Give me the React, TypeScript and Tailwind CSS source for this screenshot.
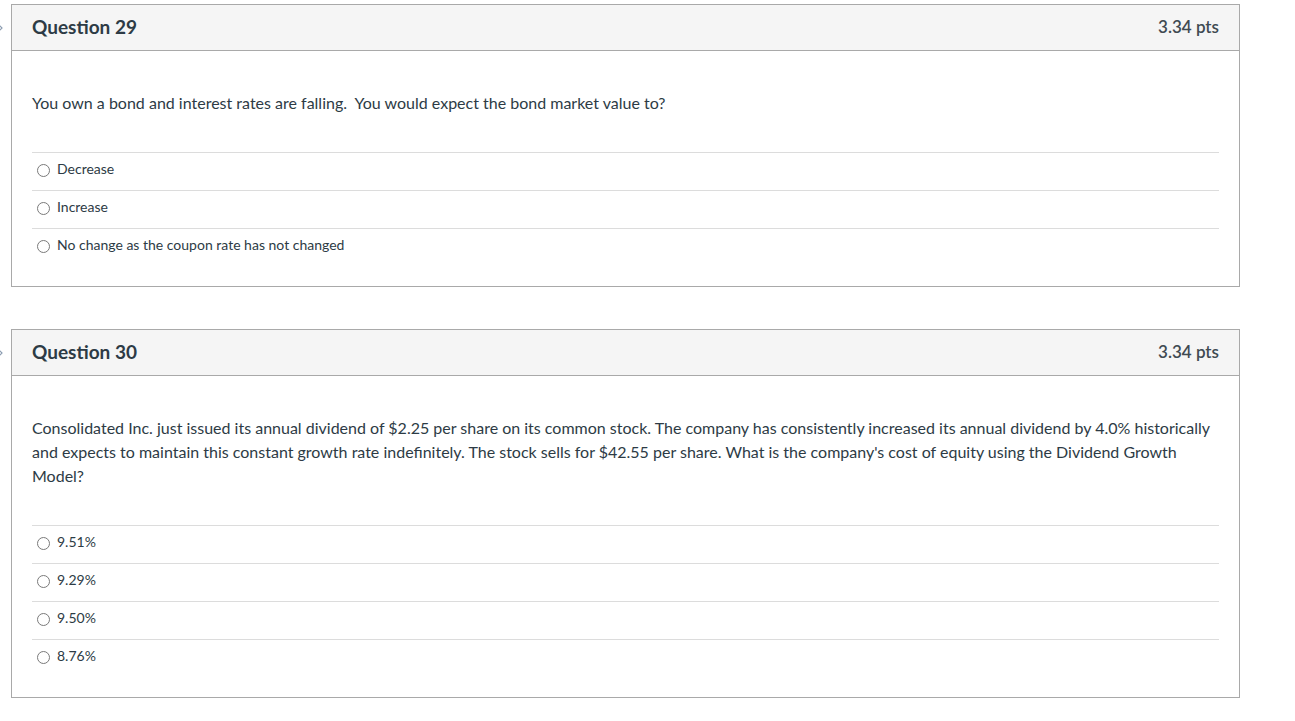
import React from 'react';

type Question = {
  title: string;
  points: string;
  text: string;
  answers: string[];
};

const questions: Question[] = [
  {
    title: 'Question 29',
    points: '3.34 pts',
    text: 'You own a bond and interest rates are falling.\u00a0 You would expect the bond market value to?',
    answers: ['Decrease', 'Increase', 'No change as the coupon rate has not changed'],
  },
  {
    title: 'Question 30',
    points: '3.34 pts',
    text:
      "Consolidated Inc. just issued its annual dividend of $2.25 per share on its common stock. The company has consistently increased its annual dividend by 4.0% historically and expects to maintain this constant growth rate indefinitely. The stock sells for $42.55 per share. What is the company's cost of equity using the Dividend Growth Model?",
    answers: ['9.51%', '9.29%', '9.50%', '8.76%'],
  },
];

const QuestionCard = ({ q }: { q: Question }) => {
  return (
    <div className="flex">
      {/* Gutter with the clipped flag arrow */}
      <div className="w-[11px] shrink-0">
        <div className="h-[47px] flex items-center overflow-hidden">
          <svg width="4" height="8" viewBox="0 0 4 8" className="-ml-[1px]">
            <path d="M0 1 L3 4 L0 7" fill="none" stroke="#8a9bb0" strokeWidth="1.2" />
          </svg>
        </div>
      </div>

      <div className="w-[1229px] border border-[#a9a9a9] bg-white">
        {/* Header */}
        <div className="h-[46px] bg-[#f5f5f5] border-b border-[#a9a9a9] flex items-center justify-between px-[20px] pb-[3px]">
          <h2 className="text-[19px] font-bold text-[#2d3b45] leading-none">{q.title}</h2>
          <span className="text-[17px] font-semibold text-[#3f4a52] leading-none pt-[1px]">{q.points}</span>
        </div>

        {/* Body */}
        <div className="px-[20px] pt-[40px] pb-[20px]">
          <p className="text-[16px] leading-[24px] text-[#2d3b45]">{q.text}</p>

          <div className="mt-[37px]">
            {q.answers.map((a) => (
              <div key={a} className="border-t border-[#dcdcdc] h-[38px] flex items-start pt-[7px]">
                <span className="ml-[5px] mt-[4px] w-[13px] h-[13px] rounded-full border border-[#7a7a7a] bg-white shrink-0" />
                <span className="ml-[7px] text-[14px] leading-[18px] text-[#2d3b45]">{a}</span>
              </div>
            ))}
          </div>
        </div>
      </div>
    </div>
  );
};

const App = () => {
  return (
    <div className="min-h-screen bg-white pt-[4px] font-['Lato','Liberation_Sans',sans-serif]">
      <div className="flex flex-col gap-[42px]">
        {questions.map((q) => (
          <QuestionCard key={q.title} q={q} />
        ))}
      </div>
    </div>
  );
};

export default App;
